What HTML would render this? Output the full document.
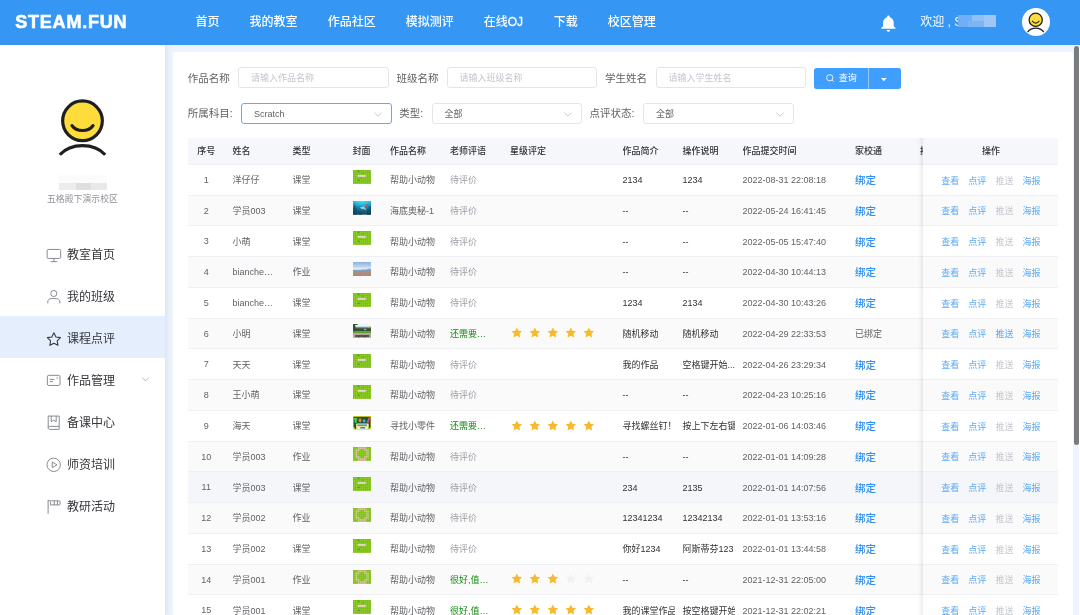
<!DOCTYPE html>
<html lang="zh-CN">
<head>
<meta charset="utf-8">
<title>STEAM.FUN - 课程点评</title>
<style>
*{box-sizing:border-box}
html,body{margin:0;padding:0}
body{width:1080px;height:615px;overflow:hidden;position:relative;background:#eef4fd;
 font-family:"Liberation Sans","Noto Sans CJK SC",sans-serif;color:#606266;-webkit-text-size-adjust:none;will-change:transform}
a{text-decoration:none;cursor:pointer}
/* ---------- header ---------- */
#hd{position:absolute;left:0;top:0;width:1080px;height:45px;background:#3596f4;color:#fff}
#logo{position:absolute;left:15.2px;top:0;height:45px;line-height:45.4px;font-size:18px;font-weight:bold;letter-spacing:.8px;white-space:nowrap;-webkit-text-stroke:.6px #fff}
#nav{position:absolute;left:180.6px;top:0;height:45px;display:flex;font-size:12px;font-weight:500;line-height:45.7px;white-space:nowrap}
#nav a{color:#fff;display:block;padding:0 15px}
#nav a.oj{width:70px;padding-right:0}
#bell{position:absolute;left:880.2px;top:14.8px;width:16.8px;height:17.6px}
#wel{position:absolute;left:920.2px;top:0;height:45px;line-height:45.5px;font-size:12px;white-space:nowrap}
#mosa{position:absolute;left:958px;top:14.5px;width:38px;height:12.5px;overflow:hidden}
#mosa i{position:absolute;display:block}
#ava{position:absolute;left:1022px;top:7.7px;width:27.6px;height:28px;border-radius:50%;background:#fff}
#ava svg{position:absolute;left:0;top:0;width:100%;height:100%}
/* ---------- sidebar ---------- */
#sb{position:absolute;left:0;top:45px;width:165px;height:570px;background:#fff;box-shadow:1px 0 6px rgba(110,118,150,.2)}
#sbava{position:absolute;left:56px;top:52px;width:54px;height:60px}
#sbmos{position:absolute;left:58.5px;top:130px;width:48.5px;height:15px;overflow:hidden}
#sbmos i{position:absolute;display:block}
#campus{position:absolute;left:0;top:147.5px;width:165px;text-align:center;font-size:8.9px;line-height:12px;color:#8f9196;white-space:nowrap}
#menu{position:absolute;z-index:0;left:0;top:187.7px;width:165px;margin:0;padding:0;list-style:none}
#menu li{position:relative;height:42px;line-height:45px;font-size:12px;color:#33353a;padding-left:66.9px;white-space:nowrap}
#menu li.on::before{content:"";position:absolute;left:0;top:-.4px;width:165px;height:41.3px;background:#e5eefc;z-index:-1}
#menu li svg.ic{position:absolute;left:46.2px;top:13.9px;width:15px;height:15px;overflow:visible}
#menu li svg.arr{position:absolute;left:142.2px;top:18.6px;width:7px;height:5px;overflow:visible}
/* ---------- card ---------- */
#card{position:absolute;left:172.7px;top:52.4px;width:900.4px;height:580px;background:#fff;border-radius:3px}
.lb{position:absolute;font-size:10.5px;line-height:21px;height:21px;color:#606266;white-space:nowrap}
.inp{position:absolute;width:150.5px;height:21.2px;border:1px solid #e3e5eb;border-radius:3px;background:#fff;font-size:9px;line-height:20px;padding-left:11.9px;margin-left:-.5px;color:#606266;white-space:nowrap}
.inp.ph{color:#c3c6ce}
.inp.foc{border-color:#5aabff}
.inp svg{position:absolute;right:9px;top:7.6px;width:8px;height:5px;overflow:visible}
#btn{position:absolute;left:813.7px;top:68px;width:87px;height:21px;background:#409eff;border-radius:2.5px;color:#fff;font-size:9px;line-height:21.8px;white-space:nowrap}
#btn .sep{position:absolute;left:54px;top:0;width:1px;height:21px;background:rgba(255,255,255,.45)}
#btn .q{position:absolute;left:25px;top:0}
#btn svg.s{position:absolute;left:12.2px;top:6.3px;width:8.5px;height:8.5px;overflow:visible}
#btn svg.car{position:absolute;left:67.8px;top:9.7px;width:5.6px;height:3.4px}
/* ---------- table ---------- */
#tw{position:absolute;left:187.5px;top:138.4px;width:870px;height:480px;overflow:hidden}
table{border-collapse:separate;border-spacing:0;table-layout:fixed;width:780px;font-size:9px}
th,td{padding:0;text-align:left;vertical-align:middle;border-bottom:1px solid #eef0f6;overflow:hidden}
th{height:26.45px;background:#f5f7fa;color:#303133;font-weight:500}
td{height:30.75px;background:#fff;color:#606266}
tr.even td{background:#fafafa}
tr.hover td{background:#f4f6fa}
.cell{padding:0 7.5px;line-height:17px;white-space:nowrap;overflow:hidden;text-overflow:ellipsis}
.cell.clip{text-overflow:clip}
td .cell{padding-top:2px}
td .ops{padding-top:3px}
.c .cell{text-align:center;padding:0}
td.c .cell{padding-top:1.2px}
.dk{color:#303133}
.wait{color:#9a9da4}
.good{color:#138a13}
.th{display:block;width:18.2px;height:13.9px;position:relative;top:-3.9px}
.cell.tc{overflow:visible}
.bind{color:#2f8ff2;font-weight:500;font-size:10.5px;position:relative;top:.4px}
.rate{display:block;height:13px;margin-left:1.05px;white-space:nowrap;font-size:0}
.st{display:inline-block;width:11.7px;height:11.2px;margin-right:6.36px;vertical-align:top;margin-top:-.5px}
.st.on{fill:#f7ba2a}
.st.off{fill:#eff2f7}
#fx{position:absolute;left:922.5px;top:138.4px;width:135px;height:480px;overflow:hidden}
#fxs{position:absolute;left:916.5px;top:138.4px;width:6px;height:480px;background:linear-gradient(90deg,rgba(0,0,0,0),rgba(0,0,0,.025) 45%,rgba(0,0,0,.075))}
#fx table{width:135px}
.ops{padding-left:18.8px;white-space:nowrap;line-height:17px;font-size:9px;display:flex}
.ops a{display:block;width:18px;color:#5ba9fb;margin-right:9.07px}
.ops a.dis{color:#c6c9d0}
#trk{position:absolute;left:1079.2px;top:45px;width:.8px;height:570px;background:#fff}
#scr{position:absolute;left:1074.1px;top:46.4px;width:5px;height:399px;border-radius:2.5px;background:#7a7b7f}
</style>
</head>
<body>
<svg width="0" height="0" style="position:absolute">
 <defs>
  <path id="star" d="M10 .8l2.9 5.9 6.5.9-4.7 4.6 1.1 6.5L10 15.6l-5.8 3.1 1.1-6.5L.6 7.6l6.5-.9z"/>
  <pattern id="grid" width="2.667" height="2.571" patternUnits="userSpaceOnUse"><path d="M0 .5H2.667M.5 0V2.571" stroke="#63a012" stroke-opacity=".42" stroke-width=".9" fill="none"/></pattern>
  <g id="t-g"><rect width="24" height="18" fill="#90d028"/><rect width="24" height="18" fill="url(#grid)"/><rect x="6.100" y="6.300" width="11.300" height="2.600" fill="#ecd2c8"/><rect x="15.700" y="6.200" width="1.700" height="2.400" fill="#86d2ef"/><circle cx="7.300" cy="1.700" r=".95" fill="#2f9a1c"/><circle cx="7.500" cy="13.400" r="1" fill="#2f9a1c"/><circle cx="13.100" cy="4.100" r=".7" fill="#4aa81e"/><circle cx="10.200" cy="10.400" r=".7" fill="#4aa81e"/></g>
  <g id="t-r"><rect width="24" height="18" fill="#90d028"/><path d="M6.100 0h11.550v2.800h2.950v11.600h-2.950V18H6.100v-3.600H3.200V2.800h2.900z" fill="#dbcaa4"/><path d="M8.800 2.800h6.100v2.700h2.750v6.200H14.900v2.700H8.800v-2.700H5.900V5.500h2.900z" fill="#90d028"/><rect width="24" height="18" fill="url(#grid)" opacity=".8"/><rect x="12.200" y="0" width="2.700" height="1.300" fill="#f4a060"/><rect x="12.200" y="15.600" width="2.300" height="1.900" fill="#f39ab8"/></g>
  <linearGradient id="og" x1="0" y1="0" x2="0" y2="1"><stop offset="0" stop-color="#27c3e2"/><stop offset=".3" stop-color="#1797c6"/><stop offset=".62" stop-color="#126f98"/><stop offset=".9" stop-color="#0f4f69"/><stop offset="1" stop-color="#5f7f82"/></linearGradient><radialGradient id="og2" cx=".5" cy="0" r=".5"><stop offset="0" stop-color="#4ae6f4" stop-opacity=".75"/><stop offset="1" stop-color="#4ae6f4" stop-opacity="0"/></radialGradient>
  <g id="t-o"><rect width="24" height="18" fill="url(#og)"/><rect width="24" height="18" fill="url(#og2)"/><path d="M0 18V7.500l1.300 1.500.9-6 1.300 7 1.200-2 .8 10zM24 18V4l-1.400 4-1.200-2.500-1.200 5.500-1.400-1-.8 8zM7.500 18l1-6 1.200 3 1-1.500.8 4.500z" fill="#0c4258" opacity=".6"/><path d="M8.900 8.500l5.700-1.700 3.200 5-4.600-1.500-1.300.3z" fill="#b4bfc3"/><ellipse cx="18.300" cy="5.800" rx="1.450" ry="1.750" fill="#e8434a"/></g>
  <linearGradient id="bg1" x1="0" y1="0" x2="0" y2="1"><stop offset="0" stop-color="#8bb3e6"/><stop offset=".3" stop-color="#b4d0f0"/><stop offset=".5" stop-color="#e4eef7"/><stop offset=".56" stop-color="#c3d6e4"/><stop offset=".6" stop-color="#86a4bd"/><stop offset=".7" stop-color="#7f9db6"/><stop offset=".73" stop-color="#b69c86"/><stop offset="1" stop-color="#8b6f60"/></linearGradient>
  <g id="t-b"><rect width="24" height="18" fill="url(#bg1)"/><path d="M0 10.500c3-.8 5 .6 8 .2 3-.5 5-1 8-.8 2-.3 4-1.800 6-1.600l2 .8v4H0z" fill="#7e9cb6" opacity=".8"/><rect y="12.900" width="24" height="5.100" fill="#a88e7c" opacity=".9"/><rect x="12.200" y=".7" width="2.700" height="1.500" fill="#f29a5c"/><rect x="12.200" y="15.100" width="2.500" height="2.500" fill="#e27aa8"/></g>
  
  <g id="t-l"><rect width="24" height="18" fill="#eef4f8"/><rect y="3.600" width="24" height="2.200" fill="#6a90b8"/><rect y="5.400" width="24" height="4" fill="#33502e"/><rect y="9.100" width="24" height="3.400" fill="#5ea03c"/><rect y="12.300" width="24" height="5.700" fill="#b3a594"/><path d="M0 0h6.300l-.6 1.200H2.500c1 2 1.500 4.500 1 8.200H0z" fill="#2c5226"/><rect x="2.700" y="14.400" width="18.600" height="2.300" rx=".5" fill="#56504a"/><rect x="7" y="16.500" width="1.300" height="1.200" fill="#56504a"/><rect x="14.800" y="16.500" width="1.300" height="1.200" fill="#56504a"/><rect x="14.700" y="6.300" width="2.700" height="1.700" fill="#67d2da"/><rect x="19" y="2.700" width="2.300" height="1.700" fill="#f3c4a8"/></g>
  <g id="t-c"><rect width="24" height="18" fill="#f6dc22"/><path d="M.8 1h22.400v12.500c-.5 2-2 3.300-4 3.500H4.800c-2-.2-3.500-1.500-4-3.500z" fill="#17582f"/><path d="M.7 3.600c1.800-1.800 4-1.600 5.300.3-.6 1.600-1.600 2.400-1.200 4.400.4.600 1 .6 1.200.8-1.600.5-3.300-.2-4-1.600.6-1.500.2-2.600-1.300-3.900z" fill="#52d03c"/><ellipse cx="9.300" cy="5.600" rx="2" ry="2.700" fill="#f07a30"/><ellipse cx="14.700" cy="6.300" rx="1.700" ry="2.100" fill="#5aa9f2"/><path d="M18 8.500l2.300-6c.6-1.100 2.200-.6 2.100.6l-2 6.100z" fill="#f048a0"/><rect x="4.200" y="9.600" width="16.500" height="7.500" rx=".8" fill="#f4f0a2"/><rect x="5.800" y="10.900" width="12.700" height="2.200" fill="#3f7fe2" opacity=".85"/><rect x="9.500" y="14.400" width="6.500" height="1.800" rx=".6" fill="#2f7fe0"/></g>
 </defs>
</svg>

<!-- ================= HEADER ================= -->
<div id="hd">
 <div id="logo">STEAM.FUN</div>
 <div id="nav"><a>首页</a><a>我的教室</a><a>作品社区</a><a>模拟测评</a><a class="oj">在线<span style="-webkit-text-stroke:.3px #fff">OJ</span></a><a>下载</a><a>校区管理</a></div>
 <svg id="bell" viewBox="0 0 16 17"><path fill="#fff" d="M8 .6c.75 0 1.300.55 1.300 1.250v.35c2.300.6 3.800 2.600 3.800 5.100v3.300l1.700 1.900c.3.350.1.900-.4.900H1.600c-.5 0-.7-.55-.4-.9l1.700-1.900V7.300c0-2.500 1.500-4.500 3.800-5.100v-.35C6.700 1.150 7.250.6 8 .6zM6.300 14.400h3.400c0 .95-.75 1.700-1.700 1.700s-1.700-.75-1.700-1.700z"/></svg>
 <div id="wel">欢迎 , S</div>
 <div id="mosa"><i style="left:0;top:0;width:14px;height:12.5px;background:#6eaff6"></i><i style="left:14px;top:0;width:12px;height:12.5px;background:#8fc0f8"></i><i style="left:26px;top:0;width:12px;height:12.5px;background:#9cc7f8"></i><i style="left:10px;top:6px;width:16px;height:6.5px;background:#7ab5f6"></i></div>
 <div id="ava"><svg viewBox="0 0 28 28"><circle cx="13.900" cy="11.800" r="6.700" fill="#fddc3c" stroke="#1f1f1f" stroke-width="1.300"/><path d="M10.600 13.200c1.600 2.500 5 2.500 6.600 0" fill="none" stroke="#1f1f1f" stroke-width="1.200" stroke-linecap="round"/><path d="M5.700 24.300c4-5.300 12.400-5.300 16.400 0" fill="none" stroke="#1f1f1f" stroke-width="1.300"/></svg></div>
</div>

<!-- ================= SIDEBAR ================= -->
<div id="sb">
 <svg id="sbava" viewBox="0 0 54 60"><circle cx="26.500" cy="23.800" r="19.850" fill="#fddc3c" stroke="#1f1f1f" stroke-width="3.200"/><path d="M16 28.600c4.300 6.500 16.700 6.500 21 0" fill="none" stroke="#1f1f1f" stroke-width="3.200" stroke-linecap="round"/><path d="M3.800 57.800c11-12.200 34.400-12.200 45.400 0" fill="none" stroke="#1f1f1f" stroke-width="3.200"/></svg>
 <div id="sbmos"><i style="left:0;top:0;width:48.5px;height:8px;background:#fbfbfb"></i><i style="left:0;top:8px;width:17px;height:7px;background:#ececec"></i><i style="left:17px;top:8px;width:15px;height:7px;background:#dfdfdf"></i><i style="left:32px;top:8px;width:16.500px;height:7px;background:#e8e8e8"></i></div>
 <div id="campus">五格殿下演示校区</div>
 <ul id="menu">
  <li><svg class="ic" viewBox="0 0 15 15" fill="none" stroke="#82858c" stroke-width=".95"><rect x="1.150" y="2.450" width="13.500" height="9" rx="1.100"/><path d="M7.900 11.500v3M4.500 14.650h6.800"/></svg>教室首页</li>
  <li><svg class="ic" viewBox="0 0 15 15" fill="none" stroke="#82858c" stroke-width=".95"><circle cx="7.800" cy="4.500" r="3.050"/><path d="M1.800 14.400v-1.500c0-1.900 1.400-3.300 3.300-3.300h5.400c1.900 0 3.300 1.400 3.300 3.300v1.500"/></svg>我的班级</li>
  <li class="on"><svg class="ic" viewBox="0 0 15 15" fill="none" stroke="#34363c" stroke-width="1.050" stroke-linejoin="round"><path d="M7.90 1.85L9.93 5.96L14.46 6.62L11.18 9.82L11.96 14.33L7.90 12.20L3.84 14.33L4.62 9.82L1.34 6.62L5.87 5.96z"/></svg>课程点评</li>
  <li><svg class="ic" viewBox="0 0 15 15" fill="none" stroke="#82858c" stroke-width=".95"><rect x="1.350" y="2.350" width="12.700" height="10.100" rx="1.400"/><path d="M3.800 6.400h4.600M3.800 8.600h3.200"/><rect x="10.600" y="4.400" width="1.200" height="1.200" fill="#82858c" stroke="none"/></svg>作品管理<svg class="arr" viewBox="0 0 7 5" fill="none" stroke="#a9acb3" stroke-width=".9"><path d="M.4.700l3.100 3.200L6.600.7"/></svg></li>
  <li><svg class="ic" viewBox="0 0 15 15" fill="none" stroke="#82858c" stroke-width=".95"><path d="M2.200 1.050h11v13.300H3.700c-.85 0-1.500-.65-1.500-1.500zM2.200 12.850c0-.85.650-1.500 1.500-1.500h9.500M5.200 1.050v5.700l2.500-1.700 2.500 1.700v-5.700"/></svg>备课中心</li>
  <li><svg class="ic" viewBox="0 0 15 15" fill="none" stroke="#82858c" stroke-width=".95" stroke-linejoin="round"><circle cx="7.650" cy="7.800" r="6.700"/><path d="M6.250 5v5.700l4.700-2.850z"/></svg>师资培训</li>
  <li><svg class="ic" viewBox="0 0 15 15" fill="none" stroke="#82858c" stroke-width=".95"><path d="M2.100.8v14M2.100 1.850h11c.6 0 .95.350.95.950v2.200c0 .6-.35.950-.95.950h-8.600v-3M8.200 1.850v4.100M11.400 1.850v4.100"/></svg>教研活动</li>
 </ul>
</div>

<!-- ================= MAIN CARD ================= -->
<div id="card"></div>
<div class="lb" style="left:187.8px;top:67.7px">作品名称</div>
<div class="inp ph" style="left:238.7px;top:67.2px">请输入作品名称</div>
<div class="lb" style="left:396.6px;top:67.7px">班级名称</div>
<div class="inp ph" style="left:447px;top:67.2px">请输入班级名称</div>
<div class="lb" style="left:605px;top:67.7px">学生姓名</div>
<div class="inp ph" style="left:656px;top:67.2px">请输入学生姓名</div>
<div id="btn"><svg class="s" viewBox="0 0 9 9" fill="none" stroke="#fff" stroke-width=".9"><circle cx="4" cy="4" r="3.300"/><path d="M6.400 6.400l1.700 1.700"/></svg><span class="q">查询</span><i class="sep"></i><svg class="car" viewBox="0 0 6 3.400"><path d="M0 0h6L3 3.400z" fill="#fff"/></svg></div>

<div class="lb" style="left:187.8px;top:102.800px">所属科目:</div>
<div class="inp foc" style="left:241.7px;top:103px">Scratch<svg viewBox="0 0 8 5" fill="none" stroke="#c0c4cc" stroke-width=".9"><path d="M.4.600l3.600 3.600L7.600.6"/></svg></div>
<div class="lb" style="left:399.300px;top:102.800px">类型:</div>
<div class="inp" style="left:432px;top:103px">全部<svg viewBox="0 0 8 5" fill="none" stroke="#c0c4cc" stroke-width=".9"><path d="M.4.600l3.600 3.600L7.600.6"/></svg></div>
<div class="lb" style="left:589.500px;top:102.800px">点评状态:</div>
<div class="inp" style="left:643.500px;top:103px">全部<svg viewBox="0 0 8 5" fill="none" stroke="#c0c4cc" stroke-width=".9"><path d="M.4.600l3.600 3.600L7.600.6"/></svg></div>

<!-- scrolling table body (left part) -->
<div id="tw">
<table>
<colgroup><col style="width:37.5px"><col style="width:60px"><col style="width:60px"><col style="width:37.5px"><col style="width:60px"><col style="width:60px"><col style="width:112.5px"><col style="width:60px"><col style="width:60px"><col style="width:112.5px"><col style="width:60px"><col style="width:60px"></colgroup>
<thead><tr>
<th class="c"><div class="cell">序号</div></th><th><div class="cell">姓名</div></th><th><div class="cell">类型</div></th><th><div class="cell">封面</div></th><th><div class="cell">作品名称</div></th><th><div class="cell">老师评语</div></th><th><div class="cell">星级评定</div></th><th><div class="cell">作品简介</div></th><th><div class="cell">操作说明</div></th><th><div class="cell">作品提交时间</div></th><th><div class="cell">家校通</div></th><th><div class="cell clip" style="padding-left:12.5px">推送状态</div></th>
</tr></thead>
<tbody>
<tr class="">
<td class="c"><div class="cell">1</div></td>
<td><div class="cell">洋仔仔</div></td>
<td><div class="cell">课堂</div></td>
<td><div class="cell tc"><svg class="th" viewBox="0 0 24 18" preserveAspectRatio="none"><use href="#t-g"/></svg></div></td>
<td><div class="cell">帮助小动物</div></td>
<td><div class="cell wait">待评价</div></td>
<td><div class="cell"></div></td>
<td><div class="cell dk">2134</div></td>
<td><div class="cell dk">1234</div></td>
<td><div class="cell">2022-08-31 22:08:18</div></td>
<td><div class="cell"><a class="bind">绑定</a></div></td>
<td><div class="cell clip"></div></td>
</tr>
<tr class="even">
<td class="c"><div class="cell">2</div></td>
<td><div class="cell">学员003</div></td>
<td><div class="cell">课堂</div></td>
<td><div class="cell tc"><svg class="th" viewBox="0 0 24 18" preserveAspectRatio="none"><use href="#t-o"/></svg></div></td>
<td><div class="cell">海底奥秘-1</div></td>
<td><div class="cell wait">待评价</div></td>
<td><div class="cell"></div></td>
<td><div class="cell dk">--</div></td>
<td><div class="cell dk">--</div></td>
<td><div class="cell">2022-05-24 16:41:45</div></td>
<td><div class="cell"><a class="bind">绑定</a></div></td>
<td><div class="cell clip"></div></td>
</tr>
<tr class="">
<td class="c"><div class="cell">3</div></td>
<td><div class="cell">小萌</div></td>
<td><div class="cell">课堂</div></td>
<td><div class="cell tc"><svg class="th" viewBox="0 0 24 18" preserveAspectRatio="none"><use href="#t-g"/></svg></div></td>
<td><div class="cell">帮助小动物</div></td>
<td><div class="cell wait">待评价</div></td>
<td><div class="cell"></div></td>
<td><div class="cell dk">--</div></td>
<td><div class="cell dk">--</div></td>
<td><div class="cell">2022-05-05 15:47:40</div></td>
<td><div class="cell"><a class="bind">绑定</a></div></td>
<td><div class="cell clip"></div></td>
</tr>
<tr class="even">
<td class="c"><div class="cell">4</div></td>
<td><div class="cell">bianchengmao</div></td>
<td><div class="cell">作业</div></td>
<td><div class="cell tc"><svg class="th" viewBox="0 0 24 18" preserveAspectRatio="none"><use href="#t-b"/></svg></div></td>
<td><div class="cell">帮助小动物</div></td>
<td><div class="cell wait">待评价</div></td>
<td><div class="cell"></div></td>
<td><div class="cell dk">--</div></td>
<td><div class="cell dk">--</div></td>
<td><div class="cell">2022-04-30 10:44:13</div></td>
<td><div class="cell"><a class="bind">绑定</a></div></td>
<td><div class="cell clip"></div></td>
</tr>
<tr class="">
<td class="c"><div class="cell">5</div></td>
<td><div class="cell">bianchengmao</div></td>
<td><div class="cell">课堂</div></td>
<td><div class="cell tc"><svg class="th" viewBox="0 0 24 18" preserveAspectRatio="none"><use href="#t-g"/></svg></div></td>
<td><div class="cell">帮助小动物</div></td>
<td><div class="cell wait">待评价</div></td>
<td><div class="cell"></div></td>
<td><div class="cell dk">1234</div></td>
<td><div class="cell dk">2134</div></td>
<td><div class="cell">2022-04-30 10:43:26</div></td>
<td><div class="cell"><a class="bind">绑定</a></div></td>
<td><div class="cell clip"></div></td>
</tr>
<tr class="even">
<td class="c"><div class="cell">6</div></td>
<td><div class="cell">小明</div></td>
<td><div class="cell">课堂</div></td>
<td><div class="cell tc"><svg class="th" viewBox="0 0 24 18" preserveAspectRatio="none"><use href="#t-l"/></svg></div></td>
<td><div class="cell">帮助小动物</div></td>
<td><div class="cell good">还需要继续努力</div></td>
<td><div class="cell"><span class="rate"><svg class="st on" viewBox="0 0 20 20"><use href="#star"/></svg><svg class="st on" viewBox="0 0 20 20"><use href="#star"/></svg><svg class="st on" viewBox="0 0 20 20"><use href="#star"/></svg><svg class="st on" viewBox="0 0 20 20"><use href="#star"/></svg><svg class="st on" viewBox="0 0 20 20"><use href="#star"/></svg></span></div></td>
<td><div class="cell dk">随机移动</div></td>
<td><div class="cell dk">随机移动</div></td>
<td><div class="cell">2022-04-29 22:33:53</div></td>
<td><div class="cell">已绑定</div></td>
<td><div class="cell clip"></div></td>
</tr>
<tr class="">
<td class="c"><div class="cell">7</div></td>
<td><div class="cell">天天</div></td>
<td><div class="cell">课堂</div></td>
<td><div class="cell tc"><svg class="th" viewBox="0 0 24 18" preserveAspectRatio="none"><use href="#t-g"/></svg></div></td>
<td><div class="cell">帮助小动物</div></td>
<td><div class="cell wait">待评价</div></td>
<td><div class="cell"></div></td>
<td><div class="cell dk clip">我的作品</div></td>
<td><div class="cell dk clip">空格键开始...</div></td>
<td><div class="cell">2022-04-26 23:29:34</div></td>
<td><div class="cell"><a class="bind">绑定</a></div></td>
<td><div class="cell clip"></div></td>
</tr>
<tr class="even">
<td class="c"><div class="cell">8</div></td>
<td><div class="cell">王小萌</div></td>
<td><div class="cell">课堂</div></td>
<td><div class="cell tc"><svg class="th" viewBox="0 0 24 18" preserveAspectRatio="none"><use href="#t-g"/></svg></div></td>
<td><div class="cell">帮助小动物</div></td>
<td><div class="cell wait">待评价</div></td>
<td><div class="cell"></div></td>
<td><div class="cell dk">--</div></td>
<td><div class="cell dk">--</div></td>
<td><div class="cell">2022-04-23 10:25:16</div></td>
<td><div class="cell"><a class="bind">绑定</a></div></td>
<td><div class="cell clip"></div></td>
</tr>
<tr class="">
<td class="c"><div class="cell">9</div></td>
<td><div class="cell">海天</div></td>
<td><div class="cell">课堂</div></td>
<td><div class="cell tc"><svg class="th" viewBox="0 0 24 18" preserveAspectRatio="none"><use href="#t-c"/></svg></div></td>
<td><div class="cell">寻找小零件</div></td>
<td><div class="cell good">还需要继续努力</div></td>
<td><div class="cell"><span class="rate"><svg class="st on" viewBox="0 0 20 20"><use href="#star"/></svg><svg class="st on" viewBox="0 0 20 20"><use href="#star"/></svg><svg class="st on" viewBox="0 0 20 20"><use href="#star"/></svg><svg class="st on" viewBox="0 0 20 20"><use href="#star"/></svg><svg class="st on" viewBox="0 0 20 20"><use href="#star"/></svg></span></div></td>
<td><div class="cell dk clip">寻找螺丝钉！</div></td>
<td><div class="cell dk clip">按上下左右键移动</div></td>
<td><div class="cell">2022-01-06 14:03:46</div></td>
<td><div class="cell"><a class="bind">绑定</a></div></td>
<td><div class="cell clip"></div></td>
</tr>
<tr class="even">
<td class="c"><div class="cell">10</div></td>
<td><div class="cell">学员003</div></td>
<td><div class="cell">作业</div></td>
<td><div class="cell tc"><svg class="th" viewBox="0 0 24 18" preserveAspectRatio="none"><use href="#t-r"/></svg></div></td>
<td><div class="cell">帮助小动物</div></td>
<td><div class="cell wait">待评价</div></td>
<td><div class="cell"></div></td>
<td><div class="cell dk">--</div></td>
<td><div class="cell dk">--</div></td>
<td><div class="cell">2022-01-01 14:09:28</div></td>
<td><div class="cell"><a class="bind">绑定</a></div></td>
<td><div class="cell clip"></div></td>
</tr>
<tr class="hover">
<td class="c"><div class="cell">11</div></td>
<td><div class="cell">学员003</div></td>
<td><div class="cell">课堂</div></td>
<td><div class="cell tc"><svg class="th" viewBox="0 0 24 18" preserveAspectRatio="none"><use href="#t-g"/></svg></div></td>
<td><div class="cell">帮助小动物</div></td>
<td><div class="cell wait">待评价</div></td>
<td><div class="cell"></div></td>
<td><div class="cell dk">234</div></td>
<td><div class="cell dk">2135</div></td>
<td><div class="cell">2022-01-01 14:07:56</div></td>
<td><div class="cell"><a class="bind">绑定</a></div></td>
<td><div class="cell clip"></div></td>
</tr>
<tr class="even">
<td class="c"><div class="cell">12</div></td>
<td><div class="cell">学员002</div></td>
<td><div class="cell">作业</div></td>
<td><div class="cell tc"><svg class="th" viewBox="0 0 24 18" preserveAspectRatio="none"><use href="#t-r"/></svg></div></td>
<td><div class="cell">帮助小动物</div></td>
<td><div class="cell wait">待评价</div></td>
<td><div class="cell"></div></td>
<td><div class="cell dk">12341234</div></td>
<td><div class="cell dk">12342134</div></td>
<td><div class="cell">2022-01-01 13:53:16</div></td>
<td><div class="cell"><a class="bind">绑定</a></div></td>
<td><div class="cell clip"></div></td>
</tr>
<tr class="">
<td class="c"><div class="cell">13</div></td>
<td><div class="cell">学员002</div></td>
<td><div class="cell">课堂</div></td>
<td><div class="cell tc"><svg class="th" viewBox="0 0 24 18" preserveAspectRatio="none"><use href="#t-g"/></svg></div></td>
<td><div class="cell">帮助小动物</div></td>
<td><div class="cell wait">待评价</div></td>
<td><div class="cell"></div></td>
<td><div class="cell dk clip">你好1234</div></td>
<td><div class="cell dk clip">阿斯蒂芬123</div></td>
<td><div class="cell">2022-01-01 13:44:58</div></td>
<td><div class="cell"><a class="bind">绑定</a></div></td>
<td><div class="cell clip"></div></td>
</tr>
<tr class="even">
<td class="c"><div class="cell">14</div></td>
<td><div class="cell">学员001</div></td>
<td><div class="cell">作业</div></td>
<td><div class="cell tc"><svg class="th" viewBox="0 0 24 18" preserveAspectRatio="none"><use href="#t-r"/></svg></div></td>
<td><div class="cell">帮助小动物</div></td>
<td><div class="cell good">很好,值得表扬</div></td>
<td><div class="cell"><span class="rate"><svg class="st on" viewBox="0 0 20 20"><use href="#star"/></svg><svg class="st on" viewBox="0 0 20 20"><use href="#star"/></svg><svg class="st on" viewBox="0 0 20 20"><use href="#star"/></svg><svg class="st off" viewBox="0 0 20 20"><use href="#star"/></svg><svg class="st off" viewBox="0 0 20 20"><use href="#star"/></svg></span></div></td>
<td><div class="cell dk">--</div></td>
<td><div class="cell dk">--</div></td>
<td><div class="cell">2021-12-31 22:05:00</div></td>
<td><div class="cell"><a class="bind">绑定</a></div></td>
<td><div class="cell clip"></div></td>
</tr>
<tr class="">
<td class="c"><div class="cell">15</div></td>
<td><div class="cell">学员001</div></td>
<td><div class="cell">课堂</div></td>
<td><div class="cell tc"><svg class="th" viewBox="0 0 24 18" preserveAspectRatio="none"><use href="#t-g"/></svg></div></td>
<td><div class="cell">帮助小动物</div></td>
<td><div class="cell good">很好,值得表扬</div></td>
<td><div class="cell"><span class="rate"><svg class="st on" viewBox="0 0 20 20"><use href="#star"/></svg><svg class="st on" viewBox="0 0 20 20"><use href="#star"/></svg><svg class="st on" viewBox="0 0 20 20"><use href="#star"/></svg><svg class="st on" viewBox="0 0 20 20"><use href="#star"/></svg><svg class="st on" viewBox="0 0 20 20"><use href="#star"/></svg></span></div></td>
<td><div class="cell dk clip">我的课堂作品展示</div></td>
<td><div class="cell dk clip">按空格键开始游戏</div></td>
<td><div class="cell">2021-12-31 22:02:21</div></td>
<td><div class="cell"><a class="bind">绑定</a></div></td>
<td><div class="cell clip"></div></td>
</tr>
</tbody>
</table>
</div>
<!-- fixed right column -->
<div id="fxs"></div>
<div id="fx">
<table>
<thead><tr><th><div class="cell" style="text-align:center;padding-left:9.5px">操作</div></th></tr></thead>
<tbody>
<tr class=""><td><div class="ops"><a>查看</a><a>点评</a><a class="dis">推送</a><a>海报</a></div></td></tr>
<tr class="even"><td><div class="ops"><a>查看</a><a>点评</a><a class="dis">推送</a><a>海报</a></div></td></tr>
<tr class=""><td><div class="ops"><a>查看</a><a>点评</a><a class="dis">推送</a><a>海报</a></div></td></tr>
<tr class="even"><td><div class="ops"><a>查看</a><a>点评</a><a class="dis">推送</a><a>海报</a></div></td></tr>
<tr class=""><td><div class="ops"><a>查看</a><a>点评</a><a class="dis">推送</a><a>海报</a></div></td></tr>
<tr class="even"><td><div class="ops"><a>查看</a><a>点评</a><a class="">推送</a><a>海报</a></div></td></tr>
<tr class=""><td><div class="ops"><a>查看</a><a>点评</a><a class="dis">推送</a><a>海报</a></div></td></tr>
<tr class="even"><td><div class="ops"><a>查看</a><a>点评</a><a class="dis">推送</a><a>海报</a></div></td></tr>
<tr class=""><td><div class="ops"><a>查看</a><a>点评</a><a class="dis">推送</a><a>海报</a></div></td></tr>
<tr class="even"><td><div class="ops"><a>查看</a><a>点评</a><a class="dis">推送</a><a>海报</a></div></td></tr>
<tr class="hover"><td><div class="ops"><a>查看</a><a>点评</a><a class="dis">推送</a><a>海报</a></div></td></tr>
<tr class="even"><td><div class="ops"><a>查看</a><a>点评</a><a class="dis">推送</a><a>海报</a></div></td></tr>
<tr class=""><td><div class="ops"><a>查看</a><a>点评</a><a class="dis">推送</a><a>海报</a></div></td></tr>
<tr class="even"><td><div class="ops"><a>查看</a><a>点评</a><a class="dis">推送</a><a>海报</a></div></td></tr>
<tr class=""><td><div class="ops"><a>查看</a><a>点评</a><a class="dis">推送</a><a>海报</a></div></td></tr>
</tbody>
</table>
</div>
<div id="trk"></div>
<div id="scr"></div>
</body>
</html>
